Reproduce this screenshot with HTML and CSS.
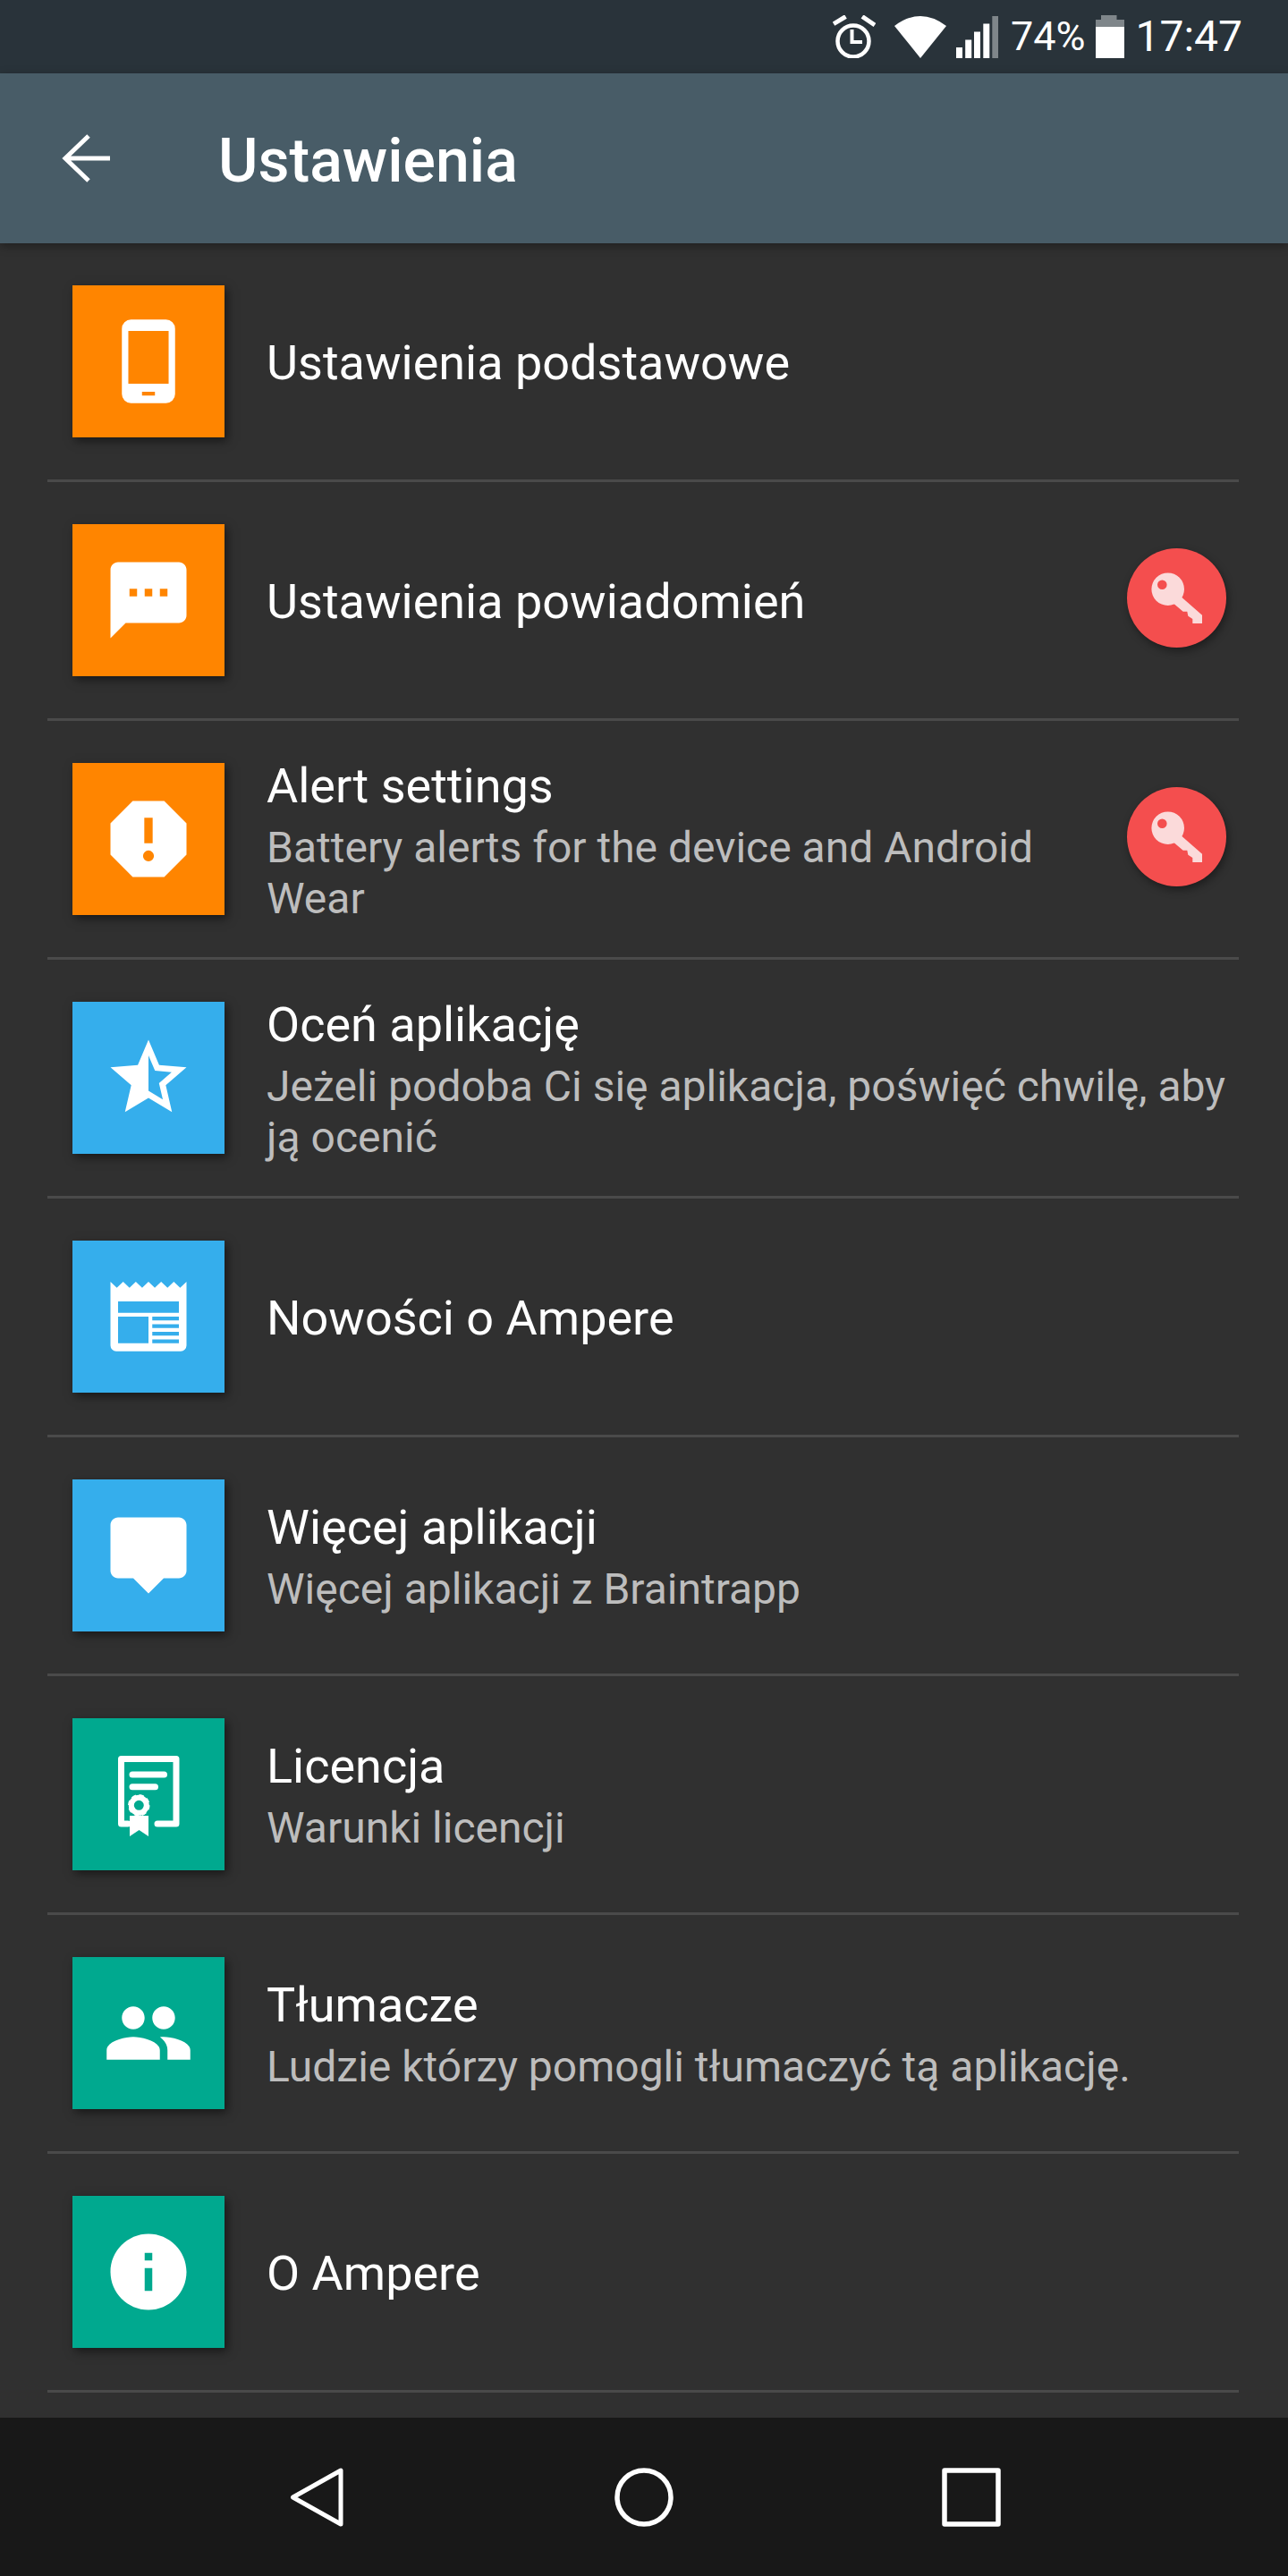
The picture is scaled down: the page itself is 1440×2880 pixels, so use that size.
FILE: index.html
```html
<!DOCTYPE html>
<html lang="pl">
<head>
    <meta charset="UTF-8">
    <meta name="viewport" content="width=device-width, initial-scale=1.0">
    <title>Ustawienia</title>
    <link rel="stylesheet" href="styles.css">
</head>
<body>
    <div class="phone">
        <div class="status-bar">
            <svg class="alarm" width="48" height="48" viewBox="0 0 48 48" fill="none" stroke="#fff">
                <circle cx="23" cy="29" r="17.5" stroke-width="4.5"/>
                <path d="M21.5 16V30H33" stroke-width="4"/>
                <path d="M1 9.7L14.5 1.5M33 1.5L47 11" stroke-width="5"/>
            </svg>
            <svg class="wifi" width="58" height="47" viewBox="0 0 58 47" fill="#fff">
                <path d="M0 11Q29-11 58 11L29 47z"/>
            </svg>
            <svg class="signal" width="47" height="47" viewBox="0 0 47 47" fill="#fff">
                <rect x="0" y="35" width="7" height="12"/>
                <rect x="10.2" y="26.5" width="7" height="20.5"/>
                <rect x="20" y="17.5" width="7" height="29.5"/>
                <rect x="30.3" y="8.5" width="7" height="38.5"/>
                <rect x="40.3" y="0" width="6.7" height="47" fill="#7f868a"/>
            </svg>
            <span class="status-text battery-level">74%</span>
            <svg class="battery" width="32" height="48" viewBox="0 0 32 48">
                <path d="M6 0H23.500V5H32V13H0V5H6z" fill="#7f868a"/>
                <rect x="0" y="13" width="32" height="35" fill="#fff"/>
            </svg>
            <span class="status-text clock">17:47</span>
        </div>

        <header class="app-bar">
            <svg class="back" width="54" height="54" viewBox="0 0 54 54" fill="none" stroke="#fff" stroke-width="5">
                <path d="M54 27H4M30 2L4 27L30 52"/>
            </svg>
            <h1>Ustawienia</h1>
        </header>

        <main class="settings-list">
            <div class="row">
                <div class="tile orange">
                    <svg class="tile-icon" viewBox="0 0 24 24" fill="#fff" fill-rule="evenodd">
                        <path d="M4.900 1h9.200a2.400 2.400 0 0 1 2.400 2.400v17.200a2.400 2.400 0 0 1-2.400 2.400H4.900a2.400 2.400 0 0 1-2.400-2.400V3.400A2.400 2.400 0 0 1 4.900 1z" transform="translate(2.500 0)"/>
                        <path d="M6.700 4h10.600v13.900H6.700zM10.300 20H13.700v1H10.300z" fill="#ff8500"/>
                    </svg>
                </div>
                <div class="row-text"><div class="row-title">Ustawienia podstawowe</div></div>
            </div>

            <div class="row">
                <div class="tile orange">
                    <svg class="tile-icon" viewBox="0 0 24 24" fill="#fff">
                        <path fill-rule="evenodd" d="M20 2H4c-1.100 0-1.990.9-1.990 2L2 22l4-4h14c1.100 0 2-.9 2-2V4c0-1.100-.9-2-2-2zM9 11H7V9h2v2zm4 0h-2V9h2v2zm4 0h-2V9h2v2z"/>
                    </svg>
                </div>
                <div class="row-text"><div class="row-title">Ustawienia powiadomień</div></div>
                <div class="key-badge">
                    <svg width="111" height="111" viewBox="0 0 111 111" fill="#fbdada" fill-rule="evenodd">
                        <path d="M45.700 27.400a18.300 18.300 0 1 1 0 36.600 18.300 18.300 0 0 1 0-36.600zM39.300 35.400a5.300 5.300 0 1 0 0 10.600 5.300 5.300 0 0 0 0-10.600z"/>
                        <path d="M58 52L84 74.700V84H73.300V79L68.300 75.700L67.300 70.700H62.700L50 60z"/>
                    </svg>
                </div>
            </div>

            <div class="row">
                <div class="tile orange">
                    <svg class="tile-icon" viewBox="0 0 24 24" fill="#fff">
                        <path fill-rule="evenodd" d="M16.140 2H7.860L2 7.860v8.280L7.860 22h8.280L22 16.140V7.860zM13.100 13.100h-2.200V6.400h2.200zM12 17.900a1.440 1.440 0 1 1 0-2.880 1.440 1.440 0 0 1 0 2.880z"/>
                    </svg>
                </div>
                <div class="row-text">
                    <div class="row-title">Alert settings</div>
                    <div class="row-sub">Battery alerts for the device and Android Wear</div>
                </div>
                <div class="key-badge">
                    <svg width="111" height="111" viewBox="0 0 111 111" fill="#fbdada" fill-rule="evenodd">
                        <path d="M45.700 27.400a18.300 18.300 0 1 1 0 36.600 18.300 18.300 0 0 1 0-36.600zM39.300 35.400a5.300 5.300 0 1 0 0 10.600 5.300 5.300 0 0 0 0-10.600z"/>
                        <path d="M58 52L84 74.700V84H73.300V79L68.300 75.700L67.300 70.700H62.700L50 60z"/>
                    </svg>
                </div>
            </div>

            <div class="row">
                <div class="tile blue">
                    <svg class="tile-icon" viewBox="0 0 24 24" fill="#fff">
                        <path fill-rule="evenodd" d="M22 9.240l-7.190-.62L12 2 9.190 8.630 2 9.240l5.460 4.730L5.820 21 12 17.270 18.180 21l-1.630-7.030L22 9.240zM12 15.400V6.100l1.710 4.040 4.380.38-3.320 2.880 1 4.280L12 15.400z"/>
                    </svg>
                </div>
                <div class="row-text">
                    <div class="row-title">Oceń aplikację</div>
                    <div class="row-sub">Jeżeli podoba Ci się aplikacja, poświęć chwilę, aby ją ocenić</div>
                </div>
            </div>

            <div class="row">
                <div class="tile blue">
                    <svg class="tile-icon" viewBox="0 0 24 24" fill="#fff">
                        <path fill-rule="evenodd" d="M2 2.800l1.670 1.600 1.670-1.600 1.670 1.600 1.660-1.600 1.670 1.600L12 2.800l1.660 1.600 1.670-1.600 1.670 1.600 1.660-1.600 1.670 1.600L22 2.800v16.800a1.500 1.500 0 0 1-1.500 1.500h-17A1.500 1.500 0 0 1 2 19.600zM4 8v3h16V8zM4 12v7h8v-7zM13 12v1h7v-1zM13 14v1h7v-1zM13 16v1h7v-1zM13 18v1h7v-1z"/>
                    </svg>
                </div>
                <div class="row-text"><div class="row-title">Nowości o Ampere</div></div>
            </div>

            <div class="row">
                <div class="tile blue">
                    <svg class="tile-icon" viewBox="0 0 24 24" fill="#fff">
                        <path d="M20 2H4c-1.100 0-2 .9-2 2v12c0 1.100.9 2 2 2h4l4 4 4-4h4c1.100 0 2-.9 2-2V4c0-1.100-.9-2-2-2z"/>
                    </svg>
                </div>
                <div class="row-text">
                    <div class="row-title">Więcej aplikacji</div>
                    <div class="row-sub">Więcej aplikacji z Braintrapp</div>
                </div>
            </div>

            <div class="row">
                <div class="tile green">
                    <!-- certificate: open frame, two text lines and a rosette with ribbon -->
                    <svg class="tile-full" viewBox="0 0 170 170" fill="none" stroke="#fff" stroke-linecap="round" stroke-linejoin="round">
                        <path d="M95 118H116V45.500H54.500V118H62" stroke-width="7"/>
                        <path d="M67 63H102.500M67 76.700H92.500" stroke-width="7"/>
                        <circle cx="74.300" cy="97.300" r="8.500" stroke-width="6"/>
                        <circle cx="74.300" cy="97.300" r="11" stroke-width="2.500" stroke-linecap="butt" stroke-dasharray="5 3.640"/>
                        <path d="M64 109H85V132L74.500 125L64 132z" fill="#fff" stroke="none"/>
                    </svg>
                </div>
                <div class="row-text">
                    <div class="row-title">Licencja</div>
                    <div class="row-sub">Warunki licencji</div>
                </div>
            </div>

            <div class="row">
                <div class="tile green">
                    <svg class="tile-icon" viewBox="0 0 24 24" fill="#fff">
                        <path d="M16 11c1.660 0 2.990-1.340 2.990-3S17.660 5 16 5c-1.660 0-3 1.340-3 3s1.340 3 3 3zm-8 0c1.660 0 2.990-1.340 2.990-3S9.660 5 8 5C6.340 5 5 6.340 5 8s1.340 3 3 3zm0 2c-2.330 0-7 1.170-7 3.500V19h14v-2.500c0-2.330-4.670-3.500-7-3.500zm8 0c-.29 0-.62.02-.97.05 1.160.84 1.970 1.970 1.970 3.450V19h6v-2.500c0-2.330-4.670-3.500-7-3.500z"/>
                    </svg>
                </div>
                <div class="row-text">
                    <div class="row-title">Tłumacze</div>
                    <div class="row-sub">Ludzie którzy pomogli tłumaczyć tą aplikację.</div>
                </div>
            </div>

            <div class="row">
                <div class="tile green">
                    <svg class="tile-icon" viewBox="0 0 24 24" fill="#fff">
                        <path fill-rule="evenodd" d="M12 2C6.480 2 2 6.480 2 12s4.480 10 10 10 10-4.480 10-10S17.520 2 12 2zm1 15h-2v-6h2v6zm0-8h-2V7h2v2z"/>
                    </svg>
                </div>
                <div class="row-text"><div class="row-title">O Ampere</div></div>
            </div>
        </main>

        <nav class="nav-bar">
            <svg width="66" height="66" viewBox="0 0 66 66" fill="none" stroke="#fff" stroke-width="5" stroke-linejoin="round">
                <path d="M60 3V63L6.500 33z"/>
            </svg>
            <svg width="66" height="66" viewBox="0 0 66 66" fill="none" stroke="#fff" stroke-width="5.500">
                <circle cx="33" cy="33" r="30"/>
            </svg>
            <svg width="66" height="66" viewBox="0 0 66 66" fill="none" stroke="#fff" stroke-width="5.500" stroke-linejoin="round">
                <rect x="3" y="3" width="60" height="60"/>
            </svg>
        </nav>
    </div>
</body>
</html>
```

FILE: styles.css
```css
* {
    margin: 0;
    padding: 0;
    box-sizing: border-box;
}

body {
    font-family: Roboto, 'Noto Sans', sans-serif;
    background: #303030;
    color: white;
}

.phone {
    width: 1440px;
    height: 2880px;
    display: flex;
    flex-direction: column;
    overflow: hidden;
}

/* Status bar */
.status-bar {
    height: 82px;
    flex-shrink: 0;
    background: #29333a;
    display: flex;
    align-items: center;
    justify-content: flex-end;
    padding-right: 51px;
}

.status-text {
    line-height: 82px;
}

.wifi { margin-left: 21px; }
.signal { margin-left: 11px; }
.battery-level { margin-left: 14px; font-size: 45px; }
.battery { margin-left: 12px; }
.clock { margin-left: 12px; font-size: 48px; }

/* App bar */
.app-bar {
    height: 190px;
    flex-shrink: 0;
    background: #485c67;
    display: flex;
    align-items: center;
    padding-left: 69px;
    box-shadow: 0 3px 10px rgba(0, 0, 0, 0.35);
    position: relative;
}

.app-bar h1 {
    font-size: 68px;
    font-weight: 500;
    margin-left: 121px;
    padding-top: 5px;
}

/* Settings rows */
.settings-list {
    flex: 1;
}

.row {
    height: 267px;
    margin: 0 55px 0 53px;
    padding: 0 14px 0 28px;
    border-bottom: 3px solid #4a4a4a;
    display: flex;
    align-items: center;
}

.tile {
    width: 170px;
    height: 170px;
    flex-shrink: 0;
    display: flex;
    align-items: center;
    justify-content: center;
    box-shadow: 3px 4px 10px rgba(0, 0, 0, 0.5);
}

.orange { background: #ff8500; }
.blue { background: #35aeec; }
.green { background: #00a98f; }

.tile-icon {
    width: 102px;
    height: 102px;
}

.tile-full {
    width: 170px;
    height: 170px;
}

.row-text {
    flex: 1;
    margin-left: 47px;
    padding-top: 4px;
}

.row-title {
    font-size: 54px;
    line-height: 62px;
}

.row-sub {
    font-size: 48px;
    line-height: 57px;
    margin-top: 9px;
    color: #bdbdbd;
}

.key-badge {
    width: 111px;
    height: 111px;
    flex-shrink: 0;
    margin-bottom: 5px;
    border-radius: 50%;
    background: #f44e4e;
    box-shadow: 2px 4px 10px rgba(0, 0, 0, 0.4);
}

.key-badge svg {
    display: block;
}

/* Navigation bar */
.nav-bar {
    height: 177px;
    flex-shrink: 0;
    background: #181818;
    display: flex;
    align-items: center;
    justify-content: center;
    gap: 300px;
}
```
